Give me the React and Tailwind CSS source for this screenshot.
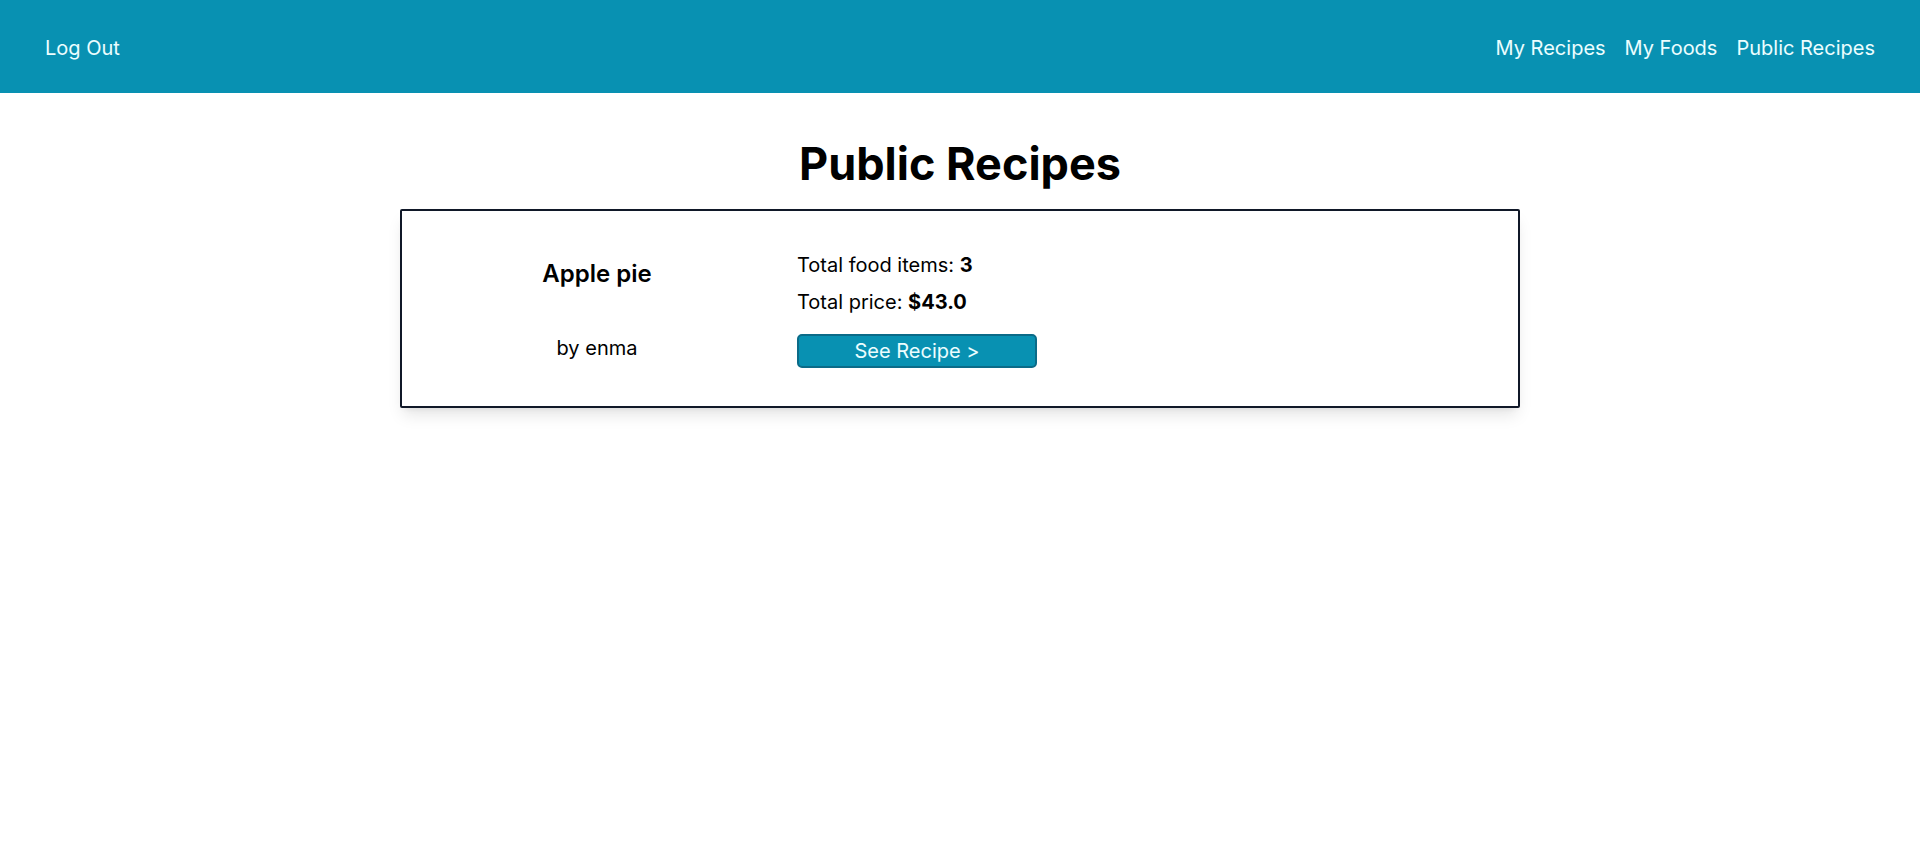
import React from 'react';

const recipes = [
  { id: 1, name: 'Apple pie', author: 'enma', items: 3, price: '43.0' },
];

const Header = () => (
  <header className="h-[93px] bg-[#0891b2] px-[45px] pt-[3px] flex items-center justify-between text-xl text-cyan-50">
    <a href="#" className="hover:underline">Log Out</a>
    <nav className="flex items-center gap-[19px]">
      <a href="#" className="hover:underline">My Recipes</a>
      <a href="#" className="hover:underline">My Foods</a>
      <a href="#" className="hover:underline">Public Recipes</a>
    </nav>
  </header>
);

const RecipeCard = ({ recipe }) => (
  <div className="w-[1120px] mx-auto border-2 border-gray-900 rounded-xs bg-white shadow-lg pt-10 pb-[38px] grid grid-cols-[390px_1fr] gap-[5px]">
    {/* left: name and author */}
    <div className="flex flex-col items-center justify-center gap-11 text-center">
      <h2 className="text-2xl font-semibold">{recipe.name}</h2>
      <p className="text-xl">by {recipe.author}</p>
    </div>

    {/* right: totals and link */}
    <div className="flex flex-col">
      <p className="text-xl leading-7">
        Total food items: <span className="font-bold">{recipe.items}</span>
      </p>
      <p className="text-xl leading-7 mt-[9px]">
        Total price: <span className="font-bold">${recipe.price}</span>
      </p>
      <button className="mt-[18px] w-[240px] h-[34px] rounded-[5px] border-2 border-[#0b6b88] bg-[#0891b2] text-xl text-cyan-50 flex items-center justify-center">
        See Recipe &gt;
      </button>
    </div>
  </div>
);

export default function App() {
  return (
    <div className="min-h-screen bg-white text-black font-['Inter',sans-serif]">
      <Header />
      <main>
        <h1 className="mt-12 text-[45px] leading-none font-bold text-center">Public Recipes</h1>
        <div className="mt-[23px] flex flex-col gap-6">
          {recipes.map((r) => (
            <RecipeCard key={r.id} recipe={r} />
          ))}
        </div>
      </main>
    </div>
  );
}
